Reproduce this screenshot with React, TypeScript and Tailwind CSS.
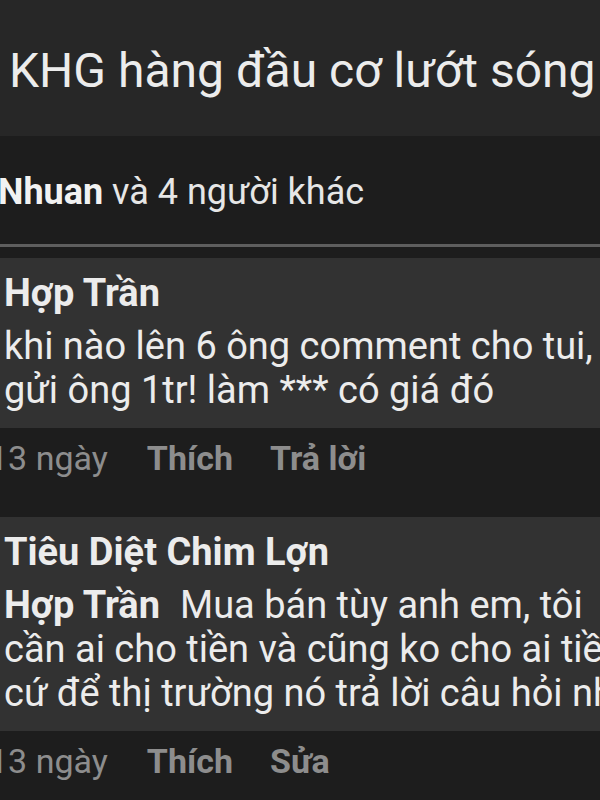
import React from 'react';

const font = { fontFamily: 'Roboto, "Noto Sans", sans-serif' };

const Comment = ({ name, lines, actions }: { name: string; lines: React.ReactNode[]; actions: string[] }) => {
  return (
    <div>
      {/* Bubble */}
      <div className="ml-[-20px] w-[680px] rounded-[20px] bg-[#323232] pl-[24px] pt-[13px] pb-[16px] text-[#ececec]">
        <p className="whitespace-nowrap text-[38px] font-bold leading-[44px]">{name}</p>
        <div className="mt-[9px]">
          {lines.map((l, i) => (
            <p key={i} className="whitespace-nowrap text-[38px] leading-[44px]">{l}</p>
          ))}
        </div>
      </div>
      {/* Meta row */}
      <div className="ml-[-11px] mt-[10px] flex items-center whitespace-nowrap text-[34px] leading-[40px] text-[#8d8d8d]">
        <span>13 ngày</span>
        <span className="ml-[39px] font-bold">{actions[0]}</span>
        <span className="ml-[37px] font-bold">{actions[1]}</span>
      </div>
    </div>
  );
};

export default function App() {
  return (
    <div className="h-[800px] w-[600px] overflow-hidden bg-[#1d1d1d]" style={font}>
      {/* Post title */}
      <div className="h-[136px] bg-[#272727] pl-[9px] pt-[43px]">
        <h1 className="whitespace-nowrap text-[48px] leading-[56px] text-[#ececec]">KHG hàng đầu cơ lướt sóng</h1>
      </div>

      {/* Reactions */}
      <div className="h-[108px] pt-[34px]">
        <p className="ml-[-2px] whitespace-nowrap text-[36px] leading-[44px] text-[#e6e6e6]">
          <span className="font-bold text-[#f2f2f2]">Nhuan</span> và 4 người khác
        </p>
      </div>
      <div className="h-[3px] bg-[#5e5e5e]" />

      {/* Comments */}
      <div className="mt-[11px] flex flex-col gap-[39px]">
        <Comment
          name="Hợp Trần"
          lines={['khi nào lên 6 ông comment cho tui,', 'gửi ông 1tr! làm *** có giá đó']}
          actions={['Thích', 'Trả lời']}
        />
        <Comment
          name="Tiêu Diệt Chim Lợn"
          lines={[
            <>
              <span className="font-bold">Hợp Trần</span>
              <span className="ml-[20px]">Mua bán tùy anh em, tôi</span>
            </>,
            'cần ai cho tiền và cũng ko cho ai tiền',
            'cứ để thị trường nó trả lời câu hỏi nhé',
          ]}
          actions={['Thích', 'Sửa']}
        />
      </div>
    </div>
  );
}
